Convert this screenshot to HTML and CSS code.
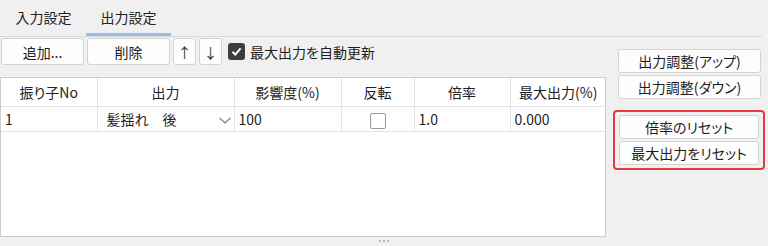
FILE: index.html
```html
<!DOCTYPE html>
<html lang="ja">
<head>
    <meta charset="UTF-8">
    <title>出力設定</title>
    <link rel="stylesheet" href="styles.css">
</head>
<body>
    <div class="tabs">
        <div class="tab">入力設定</div>
        <div class="tab active">出力設定</div>
    </div>

    <div class="main">
        <div class="left">
            <div class="toolbar">
                <button class="btn wide">追加...</button>
                <button class="btn wide">削除</button>
                <button class="btn arrow">↑</button>
                <button class="btn arrow">↓</button>
                <label class="auto">
                    <span class="check on">
                        <svg width="13" height="13" viewBox="0 0 13 13"><path d="M2.5 6.8 L5.3 9.6 L10.6 3.4" fill="none" stroke="#fff" stroke-width="2"/></svg>
                    </span>
                    最大出力を自動更新
                </label>
            </div>

            <div class="grid">
                <table>
                    <colgroup>
                        <col style="width:96px">
                        <col style="width:137px">
                        <col style="width:107px">
                        <col style="width:73px">
                        <col style="width:96px">
                        <col style="width:96px">
                    </colgroup>
                    <thead>
                        <tr>
                            <th>振り子No</th>
                            <th>出力</th>
                            <th>影響度(%)</th>
                            <th>反転</th>
                            <th>倍率</th>
                            <th>最大出力(%)</th>
                        </tr>
                    </thead>
                    <tbody>
                        <tr>
                            <td>1</td>
                            <td class="combo">髪揺れ　後
                                <svg class="chev" width="12" height="7" viewBox="0 0 12 7"><path d="M0.5 0.8 L6 6 L11.5 0.8" fill="none" stroke="#777" stroke-width="1.1"/></svg>
                            </td>
                            <td>100</td>
                            <td class="center"><span class="box"></span></td>
                            <td>1.0</td>
                            <td>0.000</td>
                        </tr>
                    </tbody>
                </table>
            </div>
        </div>

        <div class="side">
            <button class="btn side-btn">出力調整(アップ)</button>
            <button class="btn side-btn">出力調整(ダウン)</button>
            <div class="marked">
                <button class="btn side-btn">倍率のリセット</button>
                <button class="btn side-btn">最大出力をリセット</button>
            </div>
        </div>
    </div>

    <div class="splitter"><span></span><span></span><span></span></div>
</body>
</html>
```

FILE: styles.css
```css
/* Reset */
* {
    margin: 0;
    padding: 0;
    box-sizing: border-box;
}

body {
    font-family: "Noto Sans CJK JP", "Noto Sans", sans-serif;
    font-size: 14px;
    font-feature-settings: "palt";
    color: #1e1e1e;
    background-color: #f0f0f0;
    width: 768px;
    height: 246px;
    overflow: hidden;
}

/* Tabs */
.tabs {
    display: flex;
    height: 37px;
    width: 762px;
    border-bottom: 1px solid #d9d9d9;
    padding-left: 1px;
}

.tab {
    width: 85px;
    line-height: 34px;
    text-align: center;
    color: #222;
}

.tab.active {
    border-bottom: 3px solid #92c0ee;
}

/* Main area */
.main {
    display: flex;
    padding-top: 1px;
}

.left {
    width: 606px;
}

.toolbar {
    display: flex;
    align-items: center;
    gap: 3px;
    padding-left: 1px;
    height: 27px;
}

.btn {
    font-family: inherit;
    font-size: 14px;
    font-feature-settings: "palt";
    color: #1e1e1e;
    background-color: #fdfdfd;
    border: 1px solid #d3d3d3;
    border-radius: 3px;
    cursor: pointer;
}

.toolbar .btn {
    height: 27px;
}

.wide {
    width: 83px;
}

.arrow {
    width: 23px;
    color: #333;
}

.auto {
    display: flex;
    align-items: center;
    gap: 5px;
    margin-left: 3px;
    color: #1e1e1e;
}

.check {
    display: flex;
    align-items: center;
    justify-content: center;
    width: 17px;
    height: 17px;
    border-radius: 3px;
    background-color: #3d3d3d;
}

/* Grid */
.grid {
    margin-top: 12px;
    height: 160px;
    background-color: #fff;
    border: 1px solid #cdcdcd;
}

table {
    width: 100%;
    table-layout: fixed;
    border-collapse: collapse;
}

th {
    height: 28px;
    font-weight: normal;
    text-align: center;
    border-right: 1px solid #e4e4e4;
    border-bottom: 1px solid #e4e4e4;
    color: #222;
}

td {
    height: 25px;
    padding-left: 4px;
    border-right: 1px solid #e4e4e4;
    border-bottom: 1px solid #e4e4e4;
    white-space: nowrap;
}

th:last-child, td:last-child {
    border-right: none;
}

td.combo {
    position: relative;
    padding-left: 9px;
}

.chev {
    position: absolute;
    right: 3px;
    top: 10px;
}

td.center {
    text-align: center;
    padding-left: 0;
}

.box {
    display: inline-block;
    width: 16px;
    height: 16px;
    border: 1px solid #9a9a9a;
    border-radius: 2px;
    vertical-align: middle;
    background-color: #fff;
}

/* Side buttons */
.side {
    display: flex;
    flex-direction: column;
    gap: 2px;
    margin-left: 12px;
    padding-top: 11px;
}

.side-btn {
    width: 143px;
    height: 24px;
}

.marked {
    display: flex;
    flex-direction: column;
    gap: 2px;
    margin-top: 9px;
    margin-left: -5px;
    width: 152px;
    padding: 3px 4px;
    border: 2px solid #e8383d;
    border-radius: 4px;
}

.marked .side-btn {
    width: 140px;
}

/* Bottom splitter */
.splitter {
    display: flex;
    justify-content: center;
    gap: 2px;
    width: 768px;
    padding-top: 3px;
}

.splitter span {
    width: 2px;
    height: 2px;
    background-color: #b5b5b5;
}
```
